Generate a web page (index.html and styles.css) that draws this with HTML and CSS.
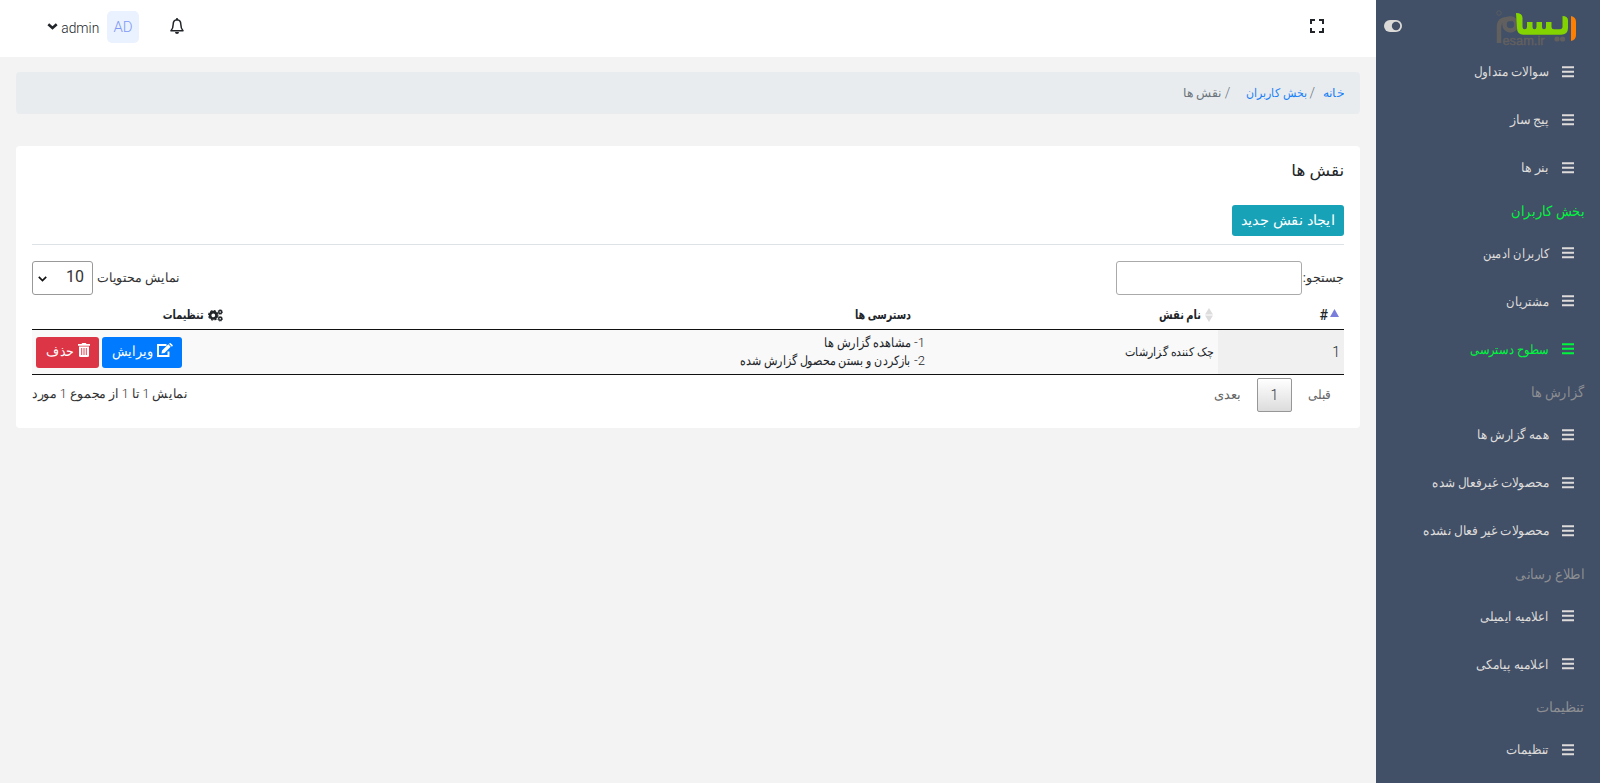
FILE: index.html
```html
<!DOCTYPE html>
<html lang="fa" dir="rtl">
<head>
<meta charset="utf-8">
<title>نقش ها</title>
<link rel="stylesheet" href="styles.css">
</head>
<body>
<svg class="defs" aria-hidden="true"><symbol id="bars" viewBox="0 0 12 12"><path d="M0 .3h12v1.9H0zM0 4.8h12v1.9H0zM0 9.3h12v1.9H0z"/></symbol></svg>
<div class="layout">
<aside class="sidebar">
  <div class="brand">
    <svg class="logo" width="82" height="38" viewBox="0 0 82 38" direction="ltr">
      <path d="M77 6q5 1 5 6v13q0 5-5 6z" fill="#ff7f00"/>
      <path d="M5 33V17q0-8 9-8h4" fill="none" stroke="#62605f" stroke-width="4.500"/>
      <circle cx="16.500" cy="14.500" r="6" fill="none" stroke="#62605f" stroke-width="4.500"/>
      <path d="M22 3q6.500 0 6.500 5v9q0 2.300 2.200 2.300T33 17v-5h5.500v5q0 2.300 2 2.300t2-2.300v-5H48v5q0 2.300 2 2.300t2-2.300v-5h5.500v5q0 2.300 2.500 2.300h6q2.500 0 2.500-2.800V6q5.500 0 5.500 4.500V18q0 6.700-7 6.700H29.500q-6.500 0-6.500-6.700z" fill="#83d300"/>
      <circle cx="5" cy="3" r="2.300" fill="none" stroke="#62605f" stroke-width=".7"/>
      <circle cx="63" cy="29" r="2.600" fill="#62605f"/><circle cx="68.600" cy="29" r="2.600" fill="#62605f"/>
      <text class="logo-text" x="8.500" y="34.500" textLength="42" lengthAdjust="spacingAndGlyphs">esam.ir</text>
    </svg>
    <svg class="toggle" width="18" height="12" viewBox="0 0 18 12"><rect width="18" height="12" rx="6" fill="#dcdad8"/><circle cx="12" cy="6" r="4.200" fill="#424f66"/></svg>
  </div>
  <nav class="menu">
    <a class="item"><svg><use href="#bars"/></svg><span data-w="75">سوالات متداول</span></a>
    <a class="item"><svg><use href="#bars"/></svg><span data-w="39">پیج ساز</span></a>
    <a class="item"><svg><use href="#bars"/></svg><span data-w="28">بنر ها</span></a>
    <h6 class="group on"><span data-w="73">بخش کاربران</span></h6>
    <a class="item"><svg><use href="#bars"/></svg><span data-w="66">کاربران ادمین</span></a>
    <a class="item"><svg><use href="#bars"/></svg><span data-w="43">مشتریان</span></a>
    <a class="item on"><svg><use href="#bars"/></svg><span data-w="79">سطوح دسترسی</span></a>
    <h6 class="group"><span data-w="53">گزارش ها</span></h6>
    <a class="item"><svg><use href="#bars"/></svg><span data-w="72">همه گزارش ها</span></a>
    <a class="item"><svg><use href="#bars"/></svg><span data-w="117">محصولات غیرفعال شده</span></a>
    <a class="item"><svg><use href="#bars"/></svg><span data-w="126">محصولات غیر فعال نشده</span></a>
    <h6 class="group"><span data-w="69">اطلاع رسانی</span></h6>
    <a class="item"><svg><use href="#bars"/></svg><span data-w="69">اعلامیه ایمیلی</span></a>
    <a class="item"><svg><use href="#bars"/></svg><span data-w="73">اعلامیه پیامکی</span></a>
    <h6 class="group"><span data-w="48">تنظیمات</span></h6>
    <a class="item"><svg><use href="#bars"/></svg><span data-w="43">تنظیمات</span></a>
  </nav>
</aside>
<div class="page">
  <header class="topbar">
    <svg width="14" height="14" viewBox="0 0 14 14" fill="none" stroke="#212529" stroke-width="2"><path d="M1 5V1h4M9 1h4v4M13 9v4H9M5 13H1V9"/></svg>
    <div class="user">
      <svg class="bell" width="14" height="16" viewBox="0 0 14 16"><path d="M7 1.800C4.300 2 3.200 4 3.200 6.300 3.200 9.500 2.500 11 1 12.800h12c-1.500-1.800-2.200-3.300-2.200-6.500C10.800 4 9.700 2 7 1.800z" fill="none" stroke="#212529" stroke-width="1.500" stroke-linejoin="round"/><path d="M6.200 0h1.600v2H6.200zM5 14h4a2 2 0 0 1-4 0z" fill="#212529"/></svg>
      <span class="avatar">AD</span>
      <span class="name" data-w="38">admin</span>
      <svg class="caret" width="11" height="7" viewBox="0 0 11 7"><path d="M1.300 1.300 5.500 5 9.700 1.300" fill="none" stroke="#212529" stroke-width="2.600"/></svg>
    </div>
  </header>
  <main>
    <ol class="breadcrumb">
      <li><a data-w="21">خانه</a></li><li class="sep">/</li><li><a data-w="61">بخش کاربران</a></li><li class="sep last">/</li><li><span data-w="38">نقش ها</span></li>
    </ol>
    <section class="card">
      <h5 class="title"><span data-w="53">نقش ها</span></h5>
      <a class="btn info"><span data-w="94">ایجاد نقش جدید</span></a>
      <div class="controls">
        <label><span data-w="38">جستجو</span><span class="colon">:</span><span class="search"></span></label>
        <label><span data-w="83">نمایش محتویات</span><span class="select">10<svg width="9" height="6" viewBox="0 0 9 6"><path d="m.8.800 3.700 3.700L8.200.800" fill="none" stroke="#111" stroke-width="1.700"/></svg></span></label>
      </div>
      <table>
        <thead><tr>
          <th class="c1"><div><svg class="up" width="9" height="8" viewBox="0 0 8 7"><path d="M4 0l4 7H0z" fill="#7a7ddb"/></svg><span class="hash">#</span></div></th>
          <th class="c2"><div><svg width="8" height="14" viewBox="0 0 8 14"><path d="M4 0l4 6.500H0zM4 14l4-6.500H0z" fill="#dcdcdc"/></svg><span data-w="42">نام نقش</span></div></th>
          <th class="c3"><div><span data-w="56">دسترسی ها</span></div></th>
          <th class="c4"><div><svg class="cogs" width="15" height="13" viewBox="0 0 15 13"><g fill="none" stroke="#212529"><circle cx="5.300" cy="6.300" r="3.200" stroke-width="2.600"/><circle cx="5.300" cy="6.300" r="4.700" stroke-width="1.200" stroke-dasharray="2.200 1.491"/><circle cx="12.200" cy="3" r="1.500" stroke-width="1.400"/><circle cx="12.200" cy="9.800" r="1.500" stroke-width="1.400"/><g stroke-width=".7"><circle cx="12.200" cy="3" r="2.400" stroke-dasharray="1.100 .785"/><circle cx="12.200" cy="9.800" r="2.400" stroke-dasharray="1.100 .785"/></g></g></svg><span data-w="41">تنظیمات</span></div></th>
        </tr></thead>
        <tbody><tr>
          <td class="c1">1</td>
          <td><span data-w="89">چک کننده گزارشات</span></td>
          <td><div class="perm">1- <span data-w="87">مشاهده گزارش ها</span></div><div class="perm">2- <span data-w="171">بازکردن و بستن محصول گزارش شده</span></div></td>
          <td><div class="actions">
            <a class="btn edit"><svg width="17" height="14" viewBox="0 0 17 14"><path d="M9.500 2H1v11h10.500V8.500" fill="none" stroke="#fff" stroke-width="1.900"/><path d="M4.500 10.500 5 7.500l6.300-6.200 2.400 2.400L7.500 10zM12 .7l.7-.5q.5-.4 1 0l1.900 1.900q.4.500 0 1l-.7.600z" fill="#fff"/></svg><span data-w="41">ویرایش</span></a>
            <a class="btn del"><svg width="12" height="14" viewBox="0 0 12 14"><path d="M0 1h3.500L4.200 0h3.600l.7 1H12v1.700H0z" fill="#fff"/><path d="M1 3.500h10V12.500q0 1.500-1.500 1.500h-7Q1 14 1 12.500z" fill="#fff"/><path d="M3.700 5v7M6 5v7M8.300 5v7" stroke="#dc3545" stroke-width=".9"/></svg><span data-w="28">حذف</span></a>
          </div></td>
        </tr></tbody>
      </table>
      <div class="footer">
        <div class="pager"><a><span data-w="23">قبلی</span></a><a class="current">1</a><a><span data-w="27">بعدی</span></a></div>
        <div class="info-text"><span data-w="156">نمایش 1 تا 1 از مجموع 1 مورد</span></div>
      </div>
    </section>
  </main>
</div>
</div>
<script src="fit.js"></script>
</body>
</html>
```
FILE: fit.js
```js
// Condense or widen each label to the width it is given.
document.querySelectorAll('[data-w]').forEach(function (el) {
  var natural = el.getBoundingClientRect().width;
  var target = Number(el.dataset.w);
  var inner = document.createElement('span');
  inner.className = 'fit-inner';
  inner.textContent = el.textContent;
  el.textContent = '';
  el.appendChild(inner);
  el.classList.add('fit');
  el.style.width = target + 'px';
  inner.style.transform = 'scaleX(' + target / natural + ')';
});
```
FILE: styles.css
```css
* { box-sizing: border-box; }
body { margin: 0; background: #f3f3f3; color: #212529; font: 300 13px/20px Roboto, "DejaVu Sans", sans-serif; height: 783px; overflow: hidden; }
a { text-decoration: none; }
span, a { white-space: nowrap; }
.defs { position: absolute; width: 0; height: 0; }
.fit { display: inline-block; }
.fit-inner { display: inline-block; transform-origin: right center; }
.layout { display: flex; height: 783px; }
.sidebar { width: 224px; flex: none; background: #414f67; height: 783px; overflow: hidden; }
.brand { height: 47.500px; display: flex; justify-content: space-between; padding: 10px 24px 0 8px; }
.toggle { margin-top: 10px; }
.logo { direction: ltr; }
.logo-text { font: 12px "Liberation Sans", sans-serif; fill: #62605f; stroke: #62605f; stroke-width: .4px; }
.item { display: flex; height: 48px; align-items: center; padding-right: 26px; gap: 13px; color: #dedcda; font-size: 12.500px; }
.item svg { width: 12px; height: 12px; fill: currentColor; }
.item span { line-height: 20px; }
.item > span { padding-top: 1px; }
.group { margin: 0; height: 37.500px; display: flex; align-items: center; padding: 1px 16px 0 0; font-size: 14px; font-weight: 300; color: #8c8e92; }
.on { color: #00f53d; }
.page { flex: 1; min-width: 0; }
.topbar { height: 57px; background: #fff; display: flex; justify-content: space-between; align-items: flex-start; padding: 19px 52px 0 47px; }
.user { display: flex; }
.bell { margin: -1px 0 0 31px; }
.avatar { width: 32px; height: 32px; margin: -8px 0 0 8px; border-radius: 5px; background: #eaf2ff; color: #8199f5; font-size: 15px; line-height: 33px; text-align: center; }
.name { font-size: 15px; line-height: 19px; margin-left: 3px; }
.caret { margin-top: 4px; }
main { padding: 15px 16px; }
.breadcrumb { list-style: none; margin: 0; height: 42px; padding: 0 16px; display: flex; align-items: center; border-radius: 4px; background: #e8ecef; color: #6c757d; font-size: 12px; }
.breadcrumb a { color: #1a82f7; }
.sep { margin: 0 8px 0 2px; font-size: 14px; }
.last { margin: 0 16px 0 4px; }
.card { margin-top: 32px; height: 282px; border-radius: 4px; background: #fff; padding: 15px 16px; }
.title { margin: 0 0 24px; font-size: 16px; font-weight: 500; line-height: 20px; }
.btn { display: inline-flex; align-items: center; justify-content: center; height: 31px; border-radius: 3px; color: #fff; font-size: 14px; }
.btn .fit { margin-top: -2px; }
.info { width: 112px; display: flex; background: #17a2b8; }
.controls { display: flex; justify-content: space-between; margin-top: 8px; padding-top: 16px; border-top: 1px solid #dee2e6; color: #333; }
.controls label { display: flex; align-items: center; height: 34px; }
.colon { width: 4px; font-weight: 400; }
.search { width: 186px; height: 34px; border: 1px solid #aaa; border-radius: 3px; }
.select { width: 61px; height: 34px; margin-right: 4px; border: 1px solid #999; border-radius: 3px; display: flex; align-items: center; justify-content: space-between; padding: 0 8px 3px 5px; font: 400 16px Roboto, sans-serif; }
.select svg { margin-top: 5px; }
table { width: 1312px; table-layout: fixed; border-collapse: separate; border-spacing: 0; border-bottom: 1px solid #111; }
th { height: 34.500px; padding: 7px 5px 0; text-align: right; border-bottom: 1px solid #111; font-size: 12.500px; font-weight: 700; }
th div { display: flex; align-items: center; gap: 4px; }
.hash { font-size: 14px; font-weight: 500; }
.up { margin-top: -5px; }
th.c1 { width: 126px; }
.c1 div { gap: 2px; }
.c2 { width: 289px; }
.c3 { width: 688px; }
.c3 div, .c4 div { padding-right: 13px; }
td { height: 44px; padding: 0 4px; background: #f9f9f9; font-size: 12px; }
td.c1 { background: #f0f0f0; font-size: 14px; padding: 0 4px; }
.perm { line-height: 18px; height: 18px; display: flex; gap: 3px; font-size: 13px; }
.actions { display: flex; justify-content: flex-end; gap: 3px; padding-top: 2px; }
.actions .btn { gap: 4px; padding-left: 1px; }
.actions .btn .fit { margin-top: -4px; }
.actions svg { margin-top: -5px; }
.edit { width: 80px; background: #007bff; }
.edit svg { margin-right: -1px; }
.del { width: 63px; background: #dc3545; }
.footer { display: flex; justify-content: space-between; padding-top: 3px; }
.pager { display: flex; align-items: center; color: #666; padding-right: 13px; gap: 16px; }
.current { width: 35px; height: 34px; border: 1px solid #979797; border-radius: 2px; background: linear-gradient(#fff, #dcdcdc); color: #333; font-size: 14px; line-height: 32px; text-align: center; }
.info-text { color: #333; line-height: 32px; }
```
